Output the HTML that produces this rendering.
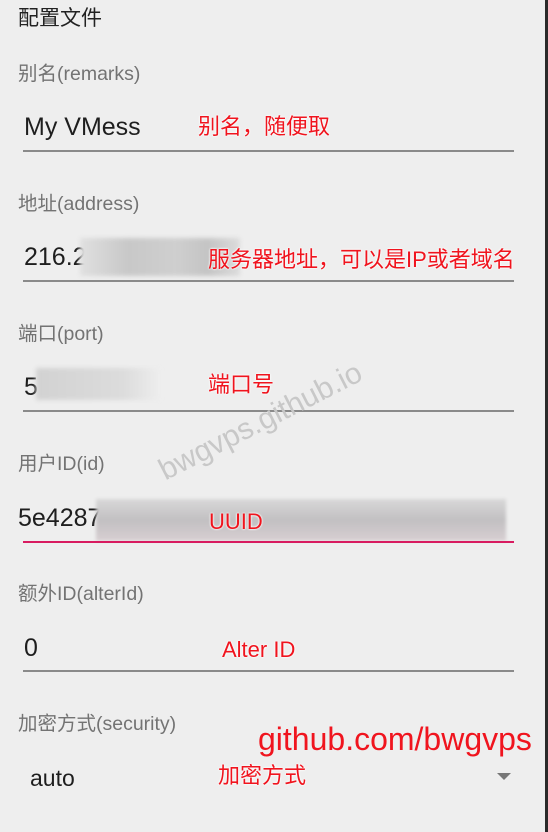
<!DOCTYPE html>
<html><head><meta charset="utf-8"><style>
body{margin:0;width:548px;height:832px;background:#eeeeee;position:relative;overflow:hidden;font-family:"Liberation Sans","Noto Sans CJK SC",sans-serif}
.a{position:absolute;white-space:nowrap;line-height:1}
.t{font-size:21px;color:#222;left:18px;top:8px}
.l{font-size:19.5px;color:#737373;left:18px}
.v{font-size:25px;color:#1e1e1e;left:24px}
.u{position:absolute;left:23px;width:491px;height:2px;background:#8a8a8a}
.r{color:#f0141e;font-size:22px;text-shadow:0 0 2px #fff,0 0 2px #fff}
.b{position:absolute;background:linear-gradient(90deg,#e0e0e0,#c8c8c8 30%,#cfcfcf 60%,#c4c4c4 80%,#dcdcdc);filter:blur(2px)}
</style></head><body>
<div style="position:absolute;right:0;top:0;width:3px;height:832px;background:#2a2a2a"></div>
<div class="a t">配置文件</div>

<div class="a l" style="top:65px">别名(remarks)</div>
<div class="a v" style="top:115px">My VMess</div>
<div class="a r" style="left:198px;top:116px">别名，随便取</div>
<div class="u" style="top:150px"></div>

<div class="a l" style="top:195px">地址(address)</div>
<div class="a v" style="top:245px">216.2</div>
<div class="b" style="left:80px;top:238px;width:160px;height:38px"></div>
<div class="a r" style="left:208px;top:249px">服务器地址，可以是IP或者域名</div>
<div class="u" style="top:280px"></div>

<div class="a l" style="top:325px">端口(port)</div>
<div class="a v" style="top:375px">5</div>
<div class="b" style="left:36px;top:368px;width:125px;height:32px;background:linear-gradient(90deg,#d2d2d2,#dcdcdc 70%,#eeeeee)"></div>
<div class="a r" style="left:208px;top:374px">端口号</div>
<div class="u" style="top:410px"></div>

<div class="a" style="left:168px;font-size:30px;color:#c8c8c8;transform:rotate(-27deg);transform-origin:left bottom;top:456px">bwgvps.github.io</div>

<div class="a l" style="top:455px">用户ID(id)</div>
<div class="a v" style="top:506px;left:18px">5e4287</div>
<div class="b" style="left:96px;top:499px;width:410px;height:42px;background:linear-gradient(180deg,#d8d8d8,#c2c0c2 50%,#d8cfd2);filter:blur(1.5px)"></div>
<div class="a r" style="left:209px;top:511px">UUID</div>
<div class="u" style="top:541px;background:#d81b60"></div>

<div class="a l" style="top:585px">额外ID(alterId)</div>
<div class="a v" style="top:636px">0</div>
<div class="a r" style="left:222px;top:639px">Alter ID</div>
<div class="u" style="top:670px"></div>

<div class="a l" style="top:715px">加密方式(security)</div>
<div class="a" style="left:258px;top:723px;font-size:32px;color:#f0141e">github.com/bwgvps</div>
<div class="a" style="left:30px;top:767px;font-size:23px;color:#1e1e1e">auto</div>
<div class="a r" style="left:218px;top:765px">加密方式</div>
<div style="position:absolute;left:497px;top:773px;width:0;height:0;border-left:7px solid transparent;border-right:7px solid transparent;border-top:7px solid #777"></div>
</body></html>
